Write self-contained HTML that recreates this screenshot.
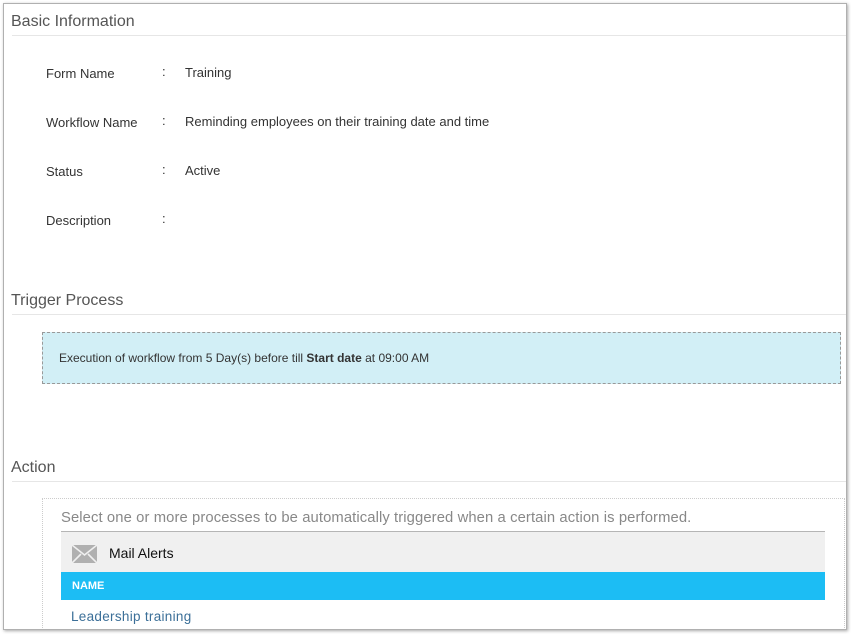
<!DOCTYPE html>
<html><head><meta charset="utf-8"><style>
html,body{margin:0;padding:0;background:#fff;}
body{width:851px;height:634px;position:relative;overflow:hidden;font-family:"Liberation Sans",Arial,sans-serif;}
.win{position:absolute;left:3px;top:3px;width:842px;height:625px;border:1px solid #b0b0b0;box-shadow:1px 1px 3px rgba(0,0,0,.35);background:#fff;overflow:hidden;}
.a{position:absolute;white-space:nowrap;}
.h{font-size:16px;color:#555;}
.hr{position:absolute;left:8px;right:0;height:1px;background:#e6e6e6;}
.l{font-size:13px;color:#333;}
</style></head><body>
<div class="win">
<div class="a h" style="left:7px;top:9px">Basic Information</div>
<div class="hr" style="top:31px"></div>
<div class="a l" style="left:42px;top:62px">Form Name</div>
<div class="a l" style="left:158px;top:60px">:</div>
<div class="a l" style="left:181px;top:61px">Training</div>
<div class="a l" style="left:42px;top:111px">Workflow Name</div>
<div class="a l" style="left:158px;top:109px">:</div>
<div class="a l" style="left:181px;top:110px">Reminding employees on their training date and time</div>
<div class="a l" style="left:42px;top:160px">Status</div>
<div class="a l" style="left:158px;top:158px">:</div>
<div class="a l" style="left:181px;top:159px">Active</div>
<div class="a l" style="left:42px;top:209px">Description</div>
<div class="a l" style="left:158px;top:207px">:</div>
<div class="a h" style="left:7px;top:288px">Trigger Process</div>
<div class="hr" style="top:310px"></div>
<div class="a" style="left:38px;top:328px;width:797px;height:50px;background:#d2eff6;border:1px dashed #999;"></div>
<div class="a" style="left:55px;top:347px;font-size:12px;color:#333">Execution of workflow from 5 Day(s) before till <b>Start date</b> at 09:00 AM</div>
<div class="a h" style="left:7px;top:455px">Action</div>
<div class="hr" style="top:477px"></div>
<div class="a" style="left:38px;top:494px;width:801px;height:140px;border:1px dotted #ccc;"></div>
<div class="a" style="left:57px;top:506px;font-size:14.8px;color:#888;letter-spacing:0.1px">Select one or more processes to be automatically triggered when a certain action is performed.</div>
<div class="a" style="left:57px;top:527px;width:764px;height:40px;background:#f0f0f0;border-top:1px solid #b5b5b5;"></div>
<svg class="a" style="left:68px;top:541px" width="25" height="18" viewBox="0 0 25 18"><rect width="25" height="18" fill="#b0b0b0"/><path d="M0 0L12.5 10L25 0M0 18L9 9M25 18L16 9" stroke="#f0f0f0" stroke-width="1.6" fill="none"/></svg>
<div class="a" style="left:105px;top:541px;font-size:14px;color:#111">Mail Alerts</div>
<div class="a" style="left:57px;top:568px;width:764px;height:28px;background:#1cbdf4;"></div>
<div class="a" style="left:68px;top:576px;font-size:11px;font-weight:bold;color:#fff">NAME</div>
<div class="a" style="left:67px;top:605px;font-size:13.5px;color:#3b6f98;letter-spacing:0.3px">Leadership training</div>
</div>
</body></html>
